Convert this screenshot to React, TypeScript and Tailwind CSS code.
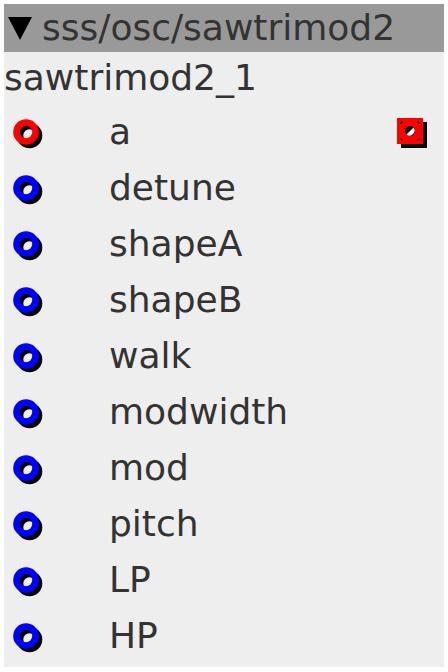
const ports = ["detune", "shapeA", "shapeB", "walk", "modwidth", "mod", "pitch", "LP", "HP"];

function PortIcon({ color }: { color: string }) {
  return (
    <svg width="36" height="36" viewBox="0 0 36 36" className="shrink-0">
      <circle cx="21.5" cy="21.5" r="9.5" fill="none" stroke="#000" strokeWidth="6.6" />
      <circle cx="18" cy="18" r="9.5" fill="none" stroke={color} strokeWidth="6.6" />
    </svg>
  );
}

function OutIcon() {
  return (
    <svg width="32" height="32" viewBox="0 0 32 32">
      <rect x="5" y="5" width="26" height="26" fill="#000" />
      <rect x="1" y="1" width="26" height="26" fill="#ff0000" />
      <path d="M5 7V5H7M21 5H23V7M23 21V23H21M7 23H5V21" stroke="#000" strokeWidth="1" fill="none" />
      <circle cx="14" cy="14" r="5" fill="#000" />
      <path d="M17.5 10.5A5 5 0 0 1 10.5 17.5Z" fill="#fff" />
    </svg>
  );
}

function Row({ label, color, out }: { label: string; color: string; out?: boolean }) {
  return (
    <div className="h-[56px] flex items-center">
      <div className="w-[105px] pl-[4px] flex items-center">
        <PortIcon color={color} />
      </div>
      <span className="flex-1">{label}</span>
      {out && (
        <div className="pr-[16px] pt-[2px] flex items-center">
          <OutIcon />
        </div>
      )}
    </div>
  );
}

export default function App() {
  return (
    <div className="w-[448px] h-[672px] bg-white p-[4px] font-['DejaVu_Sans',sans-serif] text-[36px] text-[#333333]">
      <div className="w-[440px] h-[663px] bg-[#eeeeee] flex flex-col">
        <div className="h-[48px] bg-[#999999] flex items-center">
          <svg width="24" height="24" viewBox="0 0 24 24" className="ml-[4px] mr-[10px] mt-[2px]">
            <polygon points="0,0 24,0 12,23" fill="#000" />
          </svg>
          <span>sss/osc/sawtrimod2</span>
        </div>
        <div className="h-[52px] flex items-center">sawtrimod2_1</div>
        <Row label="a" color="#ff0000" out />
        {ports.map((p) => (
          <Row key={p} label={p} color="#0000ff" />
        ))}
      </div>
    </div>
  );
}
